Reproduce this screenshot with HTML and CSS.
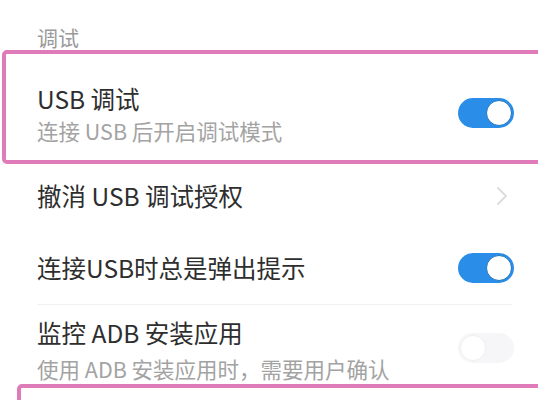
FILE: index.html
```html
<!DOCTYPE html>
<html lang="zh-CN">
<head>
  <meta charset="UTF-8">
  <meta name="viewport" content="width=device-width, initial-scale=1.0">
  <title>开发者选项</title>
  <link rel="stylesheet" href="styles.css">
</head>
<body>

  <div class="page">
    <div class="section-title">调试</div>

    <div class="item two-line first">
      <div class="item-text">
        <div class="item-title">USB 调试</div>
        <div class="item-sub">连接 USB 后开启调试模式</div>
      </div>
      <span class="switch on"><span class="knob"></span></span>
    </div>

    <div class="item">
      <div class="item-text">
        <div class="item-title">撤消 USB 调试授权</div>
      </div>
      <svg class="chevron" width="14" height="20" viewBox="0 0 14 20">
        <path d="M3 2 L11 10 L3 18" fill="none" stroke="#dcdcdc" stroke-width="1.8" stroke-linecap="round" stroke-linejoin="round"/>
      </svg>
    </div>

    <div class="item">
      <div class="item-text">
        <div class="item-title">连接USB时总是弹出提示</div>
      </div>
      <span class="switch on"><span class="knob"></span></span>
    </div>

    <div class="divider"></div>

    <div class="item two-line last">
      <div class="item-text">
        <div class="item-title">监控 ADB 安装应用</div>
        <div class="item-sub">使用 ADB 安装应用时，需要用户确认</div>
      </div>
      <span class="switch off"><span class="knob"></span></span>
    </div>

    <!-- annotation frames -->
    <div class="mark mark-usb"></div>
    <div class="mark mark-next"></div>
  </div>

</body>
</html>
```

FILE: styles.css
```css
body {
  margin: 0;
  background: #fff;
  font-family: "Noto Sans CJK SC", "Noto Sans", sans-serif;
  overflow: hidden;
}
.page {
  position: relative;
  height: 400px;
  overflow: hidden;
}
.section-title {
  padding: 22px 0 0 37px;
  height: 66px;
  box-sizing: border-box;
  font-size: 21px;
  line-height: 30px;
  color: #9a9a9a;
}
.item {
  display: flex;
  align-items: center;
  height: 72px;
  padding: 0 24px 0 37px;
}
.item.two-line {
  align-items: flex-start;
  box-sizing: border-box;
}
.item.first {
  height: 94px;
  padding-top: 17px;
}
.item.last {
  height: 88px;
  padding-top: 10px;
}
.item-text {
  flex: 1;
}
.item-title {
  font-size: 24.5px;
  line-height: 32px;
  color: #2e2e2e;
}
.item-sub {
  font-size: 21.5px;
  line-height: 32px;
  color: #a3a3a3;
}
.item.last .item-title,
.item.last .item-sub {
  line-height: 36px;
}
.divider {
  height: 1px;
  margin: 0 26px 0 37px;
  background: #f1f1f1;
}
.switch {
  position: relative;
  width: 56px;
  height: 30px;
  border-radius: 15px;
  box-sizing: border-box;
}
.switch.on {
  background: #2a8ee8;
}
.item.first .switch {
  margin-top: 15px;
}
.switch.off {
  background: #f6f6f8;
  margin-top: 18px;
}
.knob {
  position: absolute;
  top: 2px;
  width: 26px;
  height: 26px;
  border-radius: 50%;
  background: #fff;
  box-sizing: border-box;
}
.switch.on .knob {
  right: 2px;
  border: 1px solid #1f74c4;
}
.switch.off .knob {
  left: 2px;
  border: 1px solid #f0f0f2;
}
.chevron {
  margin-right: 5px;
}
.mark {
  position: absolute;
  border: 4px solid #e07bb9;
  border-radius: 5px;
}
.mark-usb {
  left: 2px;
  top: 50px;
  width: 560px;
  height: 106px;
}
.mark-next {
  left: 17px;
  top: 384px;
  width: 560px;
  height: 60px;
}
```
